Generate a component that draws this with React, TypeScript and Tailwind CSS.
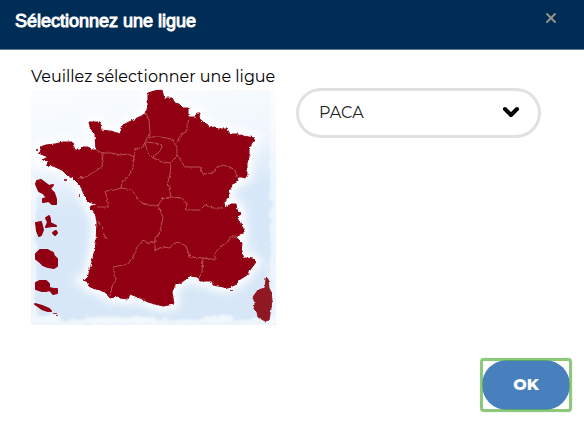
import { useState } from "react";
import { ChevronDown, X } from "lucide-react";

const LIGUES = [
  "PACA",
  "Bretagne",
  "Corse",
  "Normandie",
  "Occitanie",
];

export default function App() {
  const [ligue, setLigue] = useState("PACA");

  return (
    <div
      role="dialog"
      aria-labelledby="titre"
      className="w-full bg-white font-['Montserrat','Inter',sans-serif] text-black"
    >
      <header className="flex items-start justify-between border-b border-[#66788a] bg-[#002d55] px-[15px] pt-[9px] pb-4">
        <h1
          id="titre"
          className="font-['Liberation_Sans',sans-serif] text-lg leading-6 text-white [-webkit-text-stroke:1px_#fff] [paint-order:stroke]"
        >
          Sélectionnez une ligue
        </h1>
        <button type="button" aria-label="Fermer" className="mr-2.5 py-px text-[#94908c]">
          <X className="h-4 w-4" strokeWidth={3} />
        </button>
      </header>

      <div className="grid grid-cols-2 gap-5 pt-[15px] pr-[43px] pl-[31px]">
        <div>
          <label htmlFor="ligue" className="block text-base leading-6 whitespace-nowrap">
            Veuillez sélectionner une ligue
          </label>
          <CarteFrance />
        </div>

        <div className="relative mt-[23px] self-start">
          <select
            id="ligue"
            value={ligue}
            onChange={(e) => setLigue(e.target.value)}
            className="h-[50px] w-full appearance-none rounded-full border-3 border-[#e1e1e1] bg-white pr-12 pl-5 text-base text-[#222]"
          >
            {LIGUES.map((nom) => (
              <option key={nom}>{nom}</option>
            ))}
          </select>
          <ChevronDown
            className="pointer-events-none absolute top-3 right-[18px] h-6 w-6"
            strokeWidth={4}
          />
        </div>
      </div>

      <footer className="flex justify-end px-3.5 pt-[35px] pb-3">
        <span className="relative after:pointer-events-none after:absolute after:-inset-0.5 after:rounded-sm after:border-3 after:border-[#5cb246]/70 after:shadow-[0_0_1px_#8cc97b]">
          <button
            type="button"
            className="block h-[50px] w-[88px] rounded-full bg-[#487fbd] text-base font-extrabold text-white outline-none"
          >
            OK
          </button>
        </span>
      </footer>
    </div>
  );
}

// ─── Carte ────────────────────────────────────────────────────────────────────

const METROPOLE =
  "M148 93L154 91 162 90 164 98 172 98 175 103 179 104 183 108 188 108 188 117 195 117 197 113 200 113 199 117 203 122 208 125 209 128 215 127 217 129 227 129 230 134 237 134 238 136 242 135 243 136 255 138 249 148 249 157 247 163 247 175 245 178 242 177 237 177 238 181 233 184 229 191 228 197 224 202 225 208 230 204 236 204 237 210 241 213 237 218 240 223 243 228 243 233 236 237 242 243 241 253 245 258 253 259 256 262 250 270 247 275 239 280 237 284 228 288 213 285 212 281 200 281 197 277 190 276 182 282 175 285 172 292 174 304 163 306 155 304 148 302 140 298 130 294 128 299 120 298 118 296 110 298 105 292 93 288 88 286 88 282 83 280 88 277 93 258 96 242 97 222 95 214 90 208 91 206 97 205 89 202 85 198 83 192 80 185 77 182 73 178 67 175 62 170 53 166 46 165 49 161 42 160 48 157 38 153 42 152 40 147 46 145 55 144 63 142 72 142 75 150 80 150 83 147 88 147 93 150 96 150 95 135 90 127 89 122 100 122 101 130 110 131 120 134 123 125 137 118 146 114 148 105Z";

const OUTRE_MER = [
  "M37 181L41 180 45 183 49 186 53 185 50 189 54 193 56 199 56 204 52 204 49 201 43 202 43 199 47 198 43 193 39 191 36 184Z",
  "M36 223L41 222 42 226 43 230 41 235 39 236 37 231Z",
  "M46 218L49 216 50 219 50 223 56 226 52 226 46 227 48 222Z",
  "M54 232L56 231 57 233 55 235 53 233Z",
  "M36 254L40 250 47 250 53 253 54 256 57 259 57 266 54 268 48 267 43 265 40 262 36 259Z",
  "M36 283L40 281 46 281 49 284 49 288 54 289 57 289 57 293 53 294 50 290 46 291 42 291 36 289Z",
  "M35 304L42 306 49 309 51 311 48 311 42 309Z",
];

const CORSE =
  "M266 278L268 279 269 288 271 292 272 300 271 308 269 320 265 321 258 317 257 312 254 309 255 303 253 297 258 290 265 288Z";

// îlots et presqu'îles le long de la côte
const ILOTS = "M36 149h2v2h-2zM64 179h3v2h-3zM79 194h1v3h-1zM70 177h2v1h-2zM230 290h3v1h-3zM53 313h4v1h-4zM56 315h2v1h-2z";

const FRONTIERES = [
  "M146 114L149 119 150 135 146 140 143 147 135 149 134 157 128 154 120 155 112 153 103 153 96 150",
  "M103 153L102 167 92 173 86 177 77 178",
  "M134 157L133 168 128 177 122 182 121 188 115 190 105 191 108 202 108 207 97 207",
  "M121 188L132 190 136 196 140 202 147 205 158 206 160 202 164 198 171 197",
  "M146 140L150 137 160 137 172 139 177 147 177 155 171 163 162 162 153 158 148 153 145 143",
  "M146 142L155 143 162 145 160 151 152 158",
  "M189 118L186 132 181 134 177 143",
  "M177 155L185 167 200 167 203 174 213 173 217 167 222 165 230 167 235 170 237 177",
  "M171 163L170 174 168 182 171 197 182 198 187 204 185 210 200 210 205 205 213 208 223 208",
  "M158 206L163 217 160 232 155 238 155 250 163 247 170 248 173 244 178 242 186 246 190 257 203 258 202 272 198 280",
  "M203 258L215 260 215 253 221 246 228 242 230 237 238 237",
  "M155 242L147 243 143 240 136 249 133 257 128 264 113 267 116 279 112 287 110 296",
  "M97 220L103 228 104 235 108 240",
];

function CarteFrance() {
  return (
    <svg viewBox="31 89 245 236" className="block w-full" role="img" aria-label="Carte des ligues">
      <defs>
        <linearGradient id="ciel" x1="0.2" y1="0" x2="0.35" y2="1">
          <stop offset="0" stopColor="#fafdff" />
          <stop offset="0.3" stopColor="#eff6fd" />
          <stop offset="0.5" stopColor="#d8e8f8" />
          <stop offset="1" stopColor="#d7e7f7" />
        </linearGradient>
        <filter id="cote" x="-5%" y="-5%" width="110%" height="110%" colorInterpolationFilters="sRGB">
          <feTurbulence type="fractalNoise" baseFrequency="0.3" numOctaves="2" seed="4" />
          <feDisplacementMap in="SourceGraphic" scale="3" xChannelSelector="R" yChannelSelector="G" />
        </filter>
        <filter id="halo" x="-20%" y="-20%" width="140%" height="140%">
          <feGaussianBlur stdDeviation="4" />
        </filter>
        <filter id="pinceau" x="-5%" y="-5%" width="110%" height="110%" colorInterpolationFilters="sRGB">
          <feTurbulence type="fractalNoise" baseFrequency="0.1" numOctaves="2" seed="9" />
          <feDisplacementMap in="SourceGraphic" scale="8" xChannelSelector="R" yChannelSelector="G" />
          <feGaussianBlur stdDeviation="1" />
        </filter>
      </defs>

      <rect x="31" y="90" width="245" height="235" fill="url(#ciel)" />
      <g filter="url(#pinceau)" fill="none" stroke="#fff">
        <path d="M33 180V323H276" strokeWidth="7" strokeOpacity="0.6" />
        <path d="M274 88V325" strokeWidth="8" strokeOpacity="0.55" />
        <path d="M86 319H155M206 318H232M36 318H60" strokeWidth="5" strokeOpacity="0.6" />
        <path d="M268 260V285M254 238V254" strokeWidth="1" strokeOpacity="0.6" />
      </g>
      <path d={METROPOLE} fill="#fff" stroke="#fff" strokeWidth="10" filter="url(#halo)" />

      <g filter="url(#cote)">
        <path d={METROPOLE} fill="#900012" stroke="#900012" strokeWidth="1" />
        {FRONTIERES.map((d) => (
          <path key={d} d={d} fill="none" stroke="#c4646b" strokeWidth="0.8" />
        ))}
        <path d={CORSE} fill="#901823" stroke="#901823" strokeWidth="1" />
      </g>
      <g fill="#900012" stroke="#900012" strokeWidth="2" strokeLinejoin="round">
        {OUTRE_MER.map((d) => (
          <path key={d} d={d} />
        ))}
      </g>
      <path d={ILOTS} fill="#a8323f" />
    </svg>
  );
}
